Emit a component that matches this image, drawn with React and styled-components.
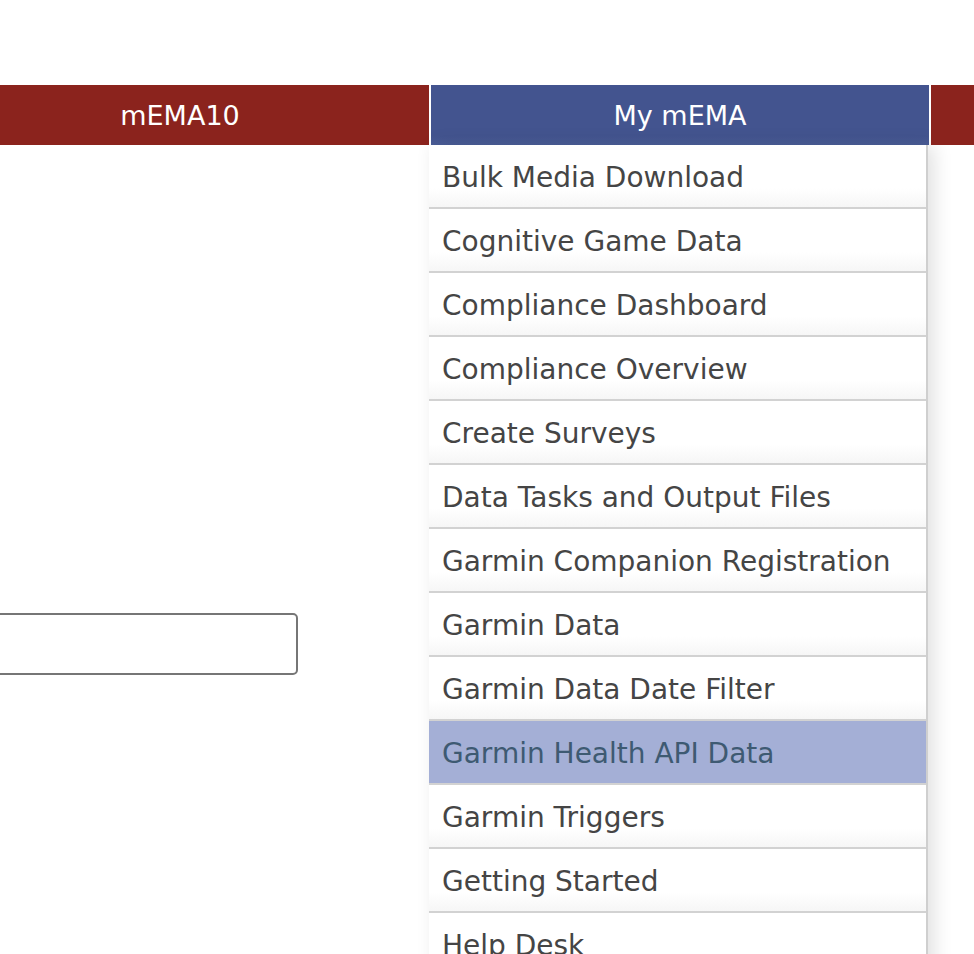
import React from "react";
import styled, { createGlobalStyle } from "styled-components";

const GlobalStyle = createGlobalStyle`
  html, body {
    margin: 0;
    padding: 0;
    background: #ffffff;
    overflow: hidden;
  }
  body {
    font-family: "DejaVu Sans", "Liberation Sans", sans-serif;
  }
`;

const MENU_ITEMS = [
  "Bulk Media Download",
  "Cognitive Game Data",
  "Compliance Dashboard",
  "Compliance Overview",
  "Create Surveys",
  "Data Tasks and Output Files",
  "Garmin Companion Registration",
  "Garmin Data",
  "Garmin Data Date Filter",
  "Garmin Health API Data",
  "Garmin Triggers",
  "Getting Started",
  "Help Desk",
];

const App = () => {
  return (
    <Page>
      <GlobalStyle />
      <NavBar>
        <Tab>mEMA10</Tab>
        <Tab $active>
          My mEMA
          <Dropdown>
            {MENU_ITEMS.map((item) => (
              <MenuItem key={item} $hover={item === "Garmin Health API Data"}>
                {item}
              </MenuItem>
            ))}
          </Dropdown>
        </Tab>
        <Tab />
      </NavBar>
      <Content>
        <TextBox type="text" />
      </Content>
    </Page>
  );
};

const Page = styled.div`
  width: 974px;
  height: 954px;
  overflow: hidden;
  padding-top: 85px;
  box-sizing: border-box;
`;

const NavBar = styled.div`
  display: flex;
  gap: 2px;
  margin-left: -69px;
  position: relative;
  z-index: 2;
`;

const Tab = styled.div`
  position: relative;
  flex: 0 0 498px;
  height: 60px;
  display: flex;
  align-items: center;
  justify-content: center;
  color: #ffffff;
  font-size: 27px;
  background: ${(p) =>
    p.$active
      ? "linear-gradient(to bottom, #43548f 0%, #43548f 85%, #4b5e98 100%)"
      : "#8b231d"};
`;

const Dropdown = styled.div`
  position: absolute;
  top: 60px;
  left: -2px;
  width: 497px;
  border-right: 2px solid #cfcfcf;
  background: #ffffff;
  box-shadow: 6px 0 18px rgba(0, 0, 0, 0.12);
  display: flex;
  flex-direction: column;
`;

const MenuItem = styled.div`
  height: 62px;
  border-bottom: 2px solid #d2d2d2;
  display: flex;
  align-items: center;
  padding-left: 13px;
  padding-top: 2px;
  box-sizing: content-box;
  height: 60px;
  font-size: 28px;
  white-space: nowrap;
  color: ${(p) => (p.$hover ? "#3e5a72" : "#454545")};
  background: ${(p) =>
    p.$hover
      ? "#a4afd6"
      : "linear-gradient(to bottom, #ffffff 0%, #ffffff 70%, #f6f6f6 100%)"};
`;

const Content = styled.div`
  padding-top: 468px;
  margin-left: -102px;
`;

const TextBox = styled.input`
  display: block;
  width: 400px;
  height: 62px;
  box-sizing: border-box;
  border: 2px solid #767676;
  border-radius: 5px;
  background: #ffffff;
`;

export default App;
